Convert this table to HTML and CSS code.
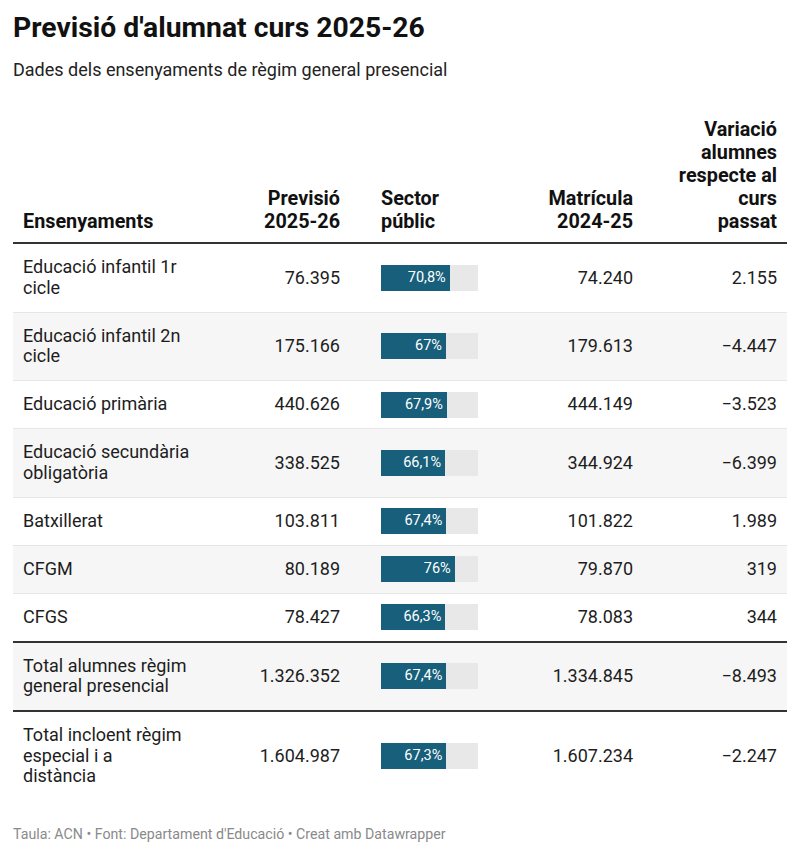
FILE: index.html
```html
<!DOCTYPE html>
<html lang="ca">
<head>
<meta charset="utf-8">
<title>Previsió d'alumnat curs 2025-26</title>
<link rel="stylesheet" href="styles.css">
</head>
<body>
<div class="chart">
  <h1 class="title">Previsió d'alumnat curs 2025-26</h1>
  <p class="subtitle">Dades dels ensenyaments de règim general presencial</p>
  <table class="tbl">
    <colgroup>
      <col class="c1"><col class="c2"><col class="c3"><col class="c4"><col class="c5">
    </colgroup>
    <thead>
      <tr>
        <th class="left">Ensenyaments</th>
        <th class="num">Previsió 2025-26</th>
        <th class="bar-col">Sector públic</th>
        <th class="num">Matrícula 2024-25</th>
        <th class="num last">Variació alumnes respecte al curs passat</th>
      </tr>
    </thead>
    <tbody>
      <tr>
        <td class="left">Educació infantil 1r cicle</td>
        <td class="num">76.395</td>
        <td class="bar-col"><div class="bar"><div class="fill" style="width:70.8%">70,8%</div></div></td>
        <td class="num">74.240</td>
        <td class="num last">2.155</td>
      </tr>
      <tr class="alt">
        <td class="left">Educació infantil 2n cicle</td>
        <td class="num">175.166</td>
        <td class="bar-col"><div class="bar"><div class="fill" style="width:67%">67%</div></div></td>
        <td class="num">179.613</td>
        <td class="num last">−4.447</td>
      </tr>
      <tr>
        <td class="left">Educació primària</td>
        <td class="num">440.626</td>
        <td class="bar-col"><div class="bar"><div class="fill" style="width:67.9%">67,9%</div></div></td>
        <td class="num">444.149</td>
        <td class="num last">−3.523</td>
      </tr>
      <tr class="alt">
        <td class="left"><span class="nowrap">Educació secundària</span> obligatòria</td>
        <td class="num">338.525</td>
        <td class="bar-col"><div class="bar"><div class="fill" style="width:66.1%">66,1%</div></div></td>
        <td class="num">344.924</td>
        <td class="num last">−6.399</td>
      </tr>
      <tr>
        <td class="left">Batxillerat</td>
        <td class="num">103.811</td>
        <td class="bar-col"><div class="bar"><div class="fill" style="width:67.4%">67,4%</div></div></td>
        <td class="num">101.822</td>
        <td class="num last">1.989</td>
      </tr>
      <tr class="alt">
        <td class="left">CFGM</td>
        <td class="num">80.189</td>
        <td class="bar-col"><div class="bar"><div class="fill" style="width:76%">76%</div></div></td>
        <td class="num">79.870</td>
        <td class="num last">319</td>
      </tr>
      <tr>
        <td class="left">CFGS</td>
        <td class="num">78.427</td>
        <td class="bar-col"><div class="bar"><div class="fill" style="width:66.3%">66,3%</div></div></td>
        <td class="num">78.083</td>
        <td class="num last">344</td>
      </tr>
      <tr class="alt total">
        <td class="left">Total alumnes règim general presencial</td>
        <td class="num">1.326.352</td>
        <td class="bar-col"><div class="bar"><div class="fill" style="width:67.4%">67,4%</div></div></td>
        <td class="num">1.334.845</td>
        <td class="num last">−8.493</td>
      </tr>
      <tr class="total final">
        <td class="left">Total incloent règim especial i a distància</td>
        <td class="num">1.604.987</td>
        <td class="bar-col"><div class="bar"><div class="fill" style="width:67.3%">67,3%</div></div></td>
        <td class="num">1.607.234</td>
        <td class="num last">−2.247</td>
      </tr>
    </tbody>
  </table>
  <p class="footer">Taula: ACN • Font: Departament d'Educació • Creat amb Datawrapper</p>
</div>
</body>
</html>
```
FILE: styles.css
```css
html, body {
  margin: 0;
  padding: 0;
  background: #ffffff;
}
body {
  font-family: Roboto, "Liberation Sans", sans-serif;
  color: #1d1d1d;
}
.chart {
  padding: 11px 13px 0 13px;
}
.title {
  margin: 0;
  font-size: 28.3px;
  line-height: 34px;
  font-weight: 700;
  color: #111;
}
.subtitle {
  margin: 14px 0 0 0;
  font-size: 18px;
  line-height: 22px;
  color: #222;
}
.tbl {
  width: 774px;
  margin-top: 37px;
  border-collapse: collapse;
  table-layout: fixed;
  font-size: 18px;
}
.c1 { width: 190px; }
.c2 { width: 147px; }
.c3 { width: 131px; }
.c4 { width: 162px; }
.c5 { width: 144px; }
th {
  font-size: 19.8px;
  font-weight: 700;
  line-height: 23px;
  vertical-align: bottom;
  padding: 0 10px 9px 10px;
  border-bottom: 2px solid #333;
  color: #111;
}
td {
  line-height: 20.5px;
  padding: 13.25px 10px 13.25px 10px;
  border-bottom: 1px solid #e6e6e6;
  vertical-align: middle;
  color: #1d1d1d;
}
th.left, td.left { text-align: left; padding-right: 14px; }
.nowrap { white-space: nowrap; }
.num { text-align: right; }
th.last, td.last { padding-left: 34px; }
.bar-col { text-align: left; padding-left: 31px; padding-right: 0; }
td.bar-col { padding-top: 0; padding-bottom: 0; }
tr.alt td { background: #f6f6f6; }
tr.total td { border-top: 2px solid #333; }
tr.final td { border-bottom: none; }
.bar {
  width: 97px;
  height: 26px;
  background: #e8e8e8;
}
.fill {
  height: 26px;
  background: #185f7b;
  color: #ffffff;
  font-size: 14.5px;
  line-height: 26px;
  text-align: right;
  padding-right: 4px;
  box-sizing: border-box;
}
.footer {
  margin: 25px 0 0 0;
  font-size: 14.2px;
  line-height: 18px;
  color: #8a8a8a;
}
```
